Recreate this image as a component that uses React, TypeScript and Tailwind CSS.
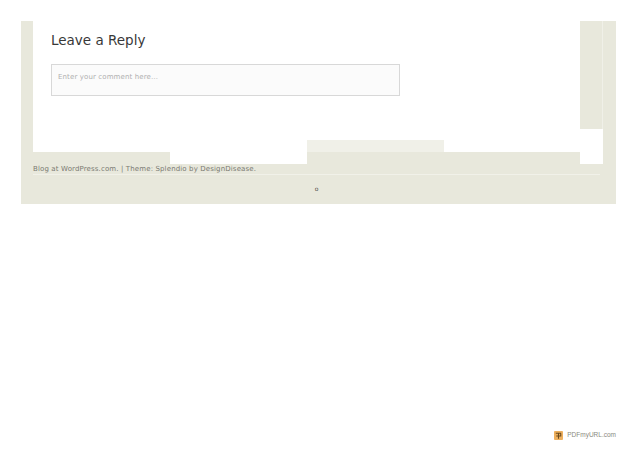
import * as React from "react";

const beige = "bg-[#e8e8dc]";

function PdfMyUrlIcon() {
    return (
        <svg width="9" height="9" viewBox="0 0 10 10" className="block">
            <rect width="10" height="10" rx="1" fill="#eeb05e" />
            <path d="M2 2.5H8M5 2.5V8.5M2.5 5.5H7.5V3" fill="none" stroke="#6a4a1e" strokeWidth="1.2" />
        </svg>
    );
}

export default function App() {
    return (
        <div className="relative h-[451px] w-[638px] overflow-hidden bg-white font-['DejaVu_Sans',sans-serif]">
            <div className="pl-[21px] pt-[21px]">
                <div className={`w-[595px] h-[183px] ${beige}`}>
                    {/* Upper part: strip, content, right strip */}
                    <div className="flex h-[143px]">
                        <div className="w-[12px] shrink-0" />
                        <div className="flex w-[547px] shrink-0 flex-col">
                            <div className="h-[119px] bg-white pl-[18px] pt-[9px]">
                                <h3 className="text-[13.5px] leading-[20px] text-[#383838]">Leave a Reply</h3>
                                <textarea
                                    readOnly
                                    placeholder="Enter your comment here…"
                                    className="mt-[14px] block h-[32px] w-[349px] resize-none border border-[#d8d8d8] bg-[#fbfbfb] px-[6px] pb-[5px] pt-[6px] text-[7px] leading-[12px] tracking-[0.12px] outline-none placeholder:text-[#b0b0b0]"
                                />
                            </div>
                            {/* Tab row */}
                            <div className="grid h-[24px] grid-cols-[137px_137px_137px_136px]">
                                <div className="flex flex-col">
                                    <div className="h-[12px] bg-white" />
                                </div>
                                <div className="bg-white" />
                                <div className="flex flex-col">
                                    <div className="h-[12px] bg-[#f0f0e8]" />
                                </div>
                                <div className="flex flex-col">
                                    <div className="h-[12px] bg-white" />
                                </div>
                            </div>
                        </div>
                        <div className="flex w-[23px] shrink-0 flex-col">
                            <div className="h-[108px] border-r border-[#f0f0e8]" />
                            <div className="h-[35px] bg-white" />
                        </div>
                    </div>
                    {/* Footer */}
                    <div className="pl-[12px]">
                        <div className="w-[567px] border-b border-[#f1f1e9] pb-[1px] pt-[1px] text-[7px] leading-[8px] tracking-[0.13px] text-[#7a7a72]">
                            Blog at WordPress.com. | Theme: Splendio by DesignDisease.
                        </div>
                        <div className="flex h-[28px] w-[567px] items-center justify-center text-[6px] leading-none text-[#555550]">
                            <span>o</span>
                        </div>
                    </div>
                </div>
            </div>
            {/* Watermark */}
            <div className="absolute bottom-[11px] right-[22px] flex items-center gap-[4px]">
                <PdfMyUrlIcon />
                <span className="font-['Liberation_Sans',sans-serif] text-[6.5px] leading-[10px] text-[#8a8a80]">PDFmyURL.com</span>
            </div>
        </div>
    );
}
